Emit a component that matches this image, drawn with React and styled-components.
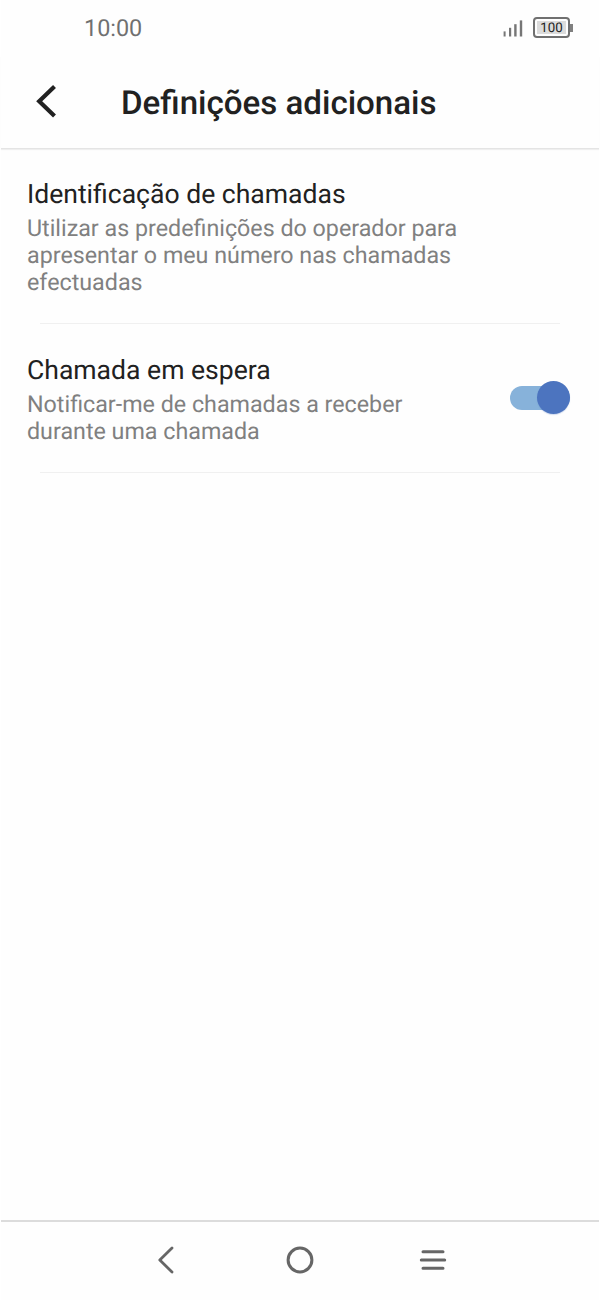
import React, { useState } from 'react';

import styled, { createGlobalStyle } from 'styled-components';


function App() {

    const [chamadaEmEspera, setChamadaEmEspera] = useState(true);

    return (
        <>
            <EstiloGlobal />

            <Ecra>

                <BarraEstado>
                    <Hora>10:00</Hora>

                    <IconesEstado>
                        <svg width="20" height="18" viewBox="0 0 20 18" fill="#767676">
                            <rect x="0.6" y="12.4" width="2" height="5.1" />
                            <rect x="6" y="8.8" width="2.2" height="8.7" />
                            <rect x="11.2" y="5.2" width="2.4" height="12.3" />
                            <rect x="16.8" y="1.4" width="2.4" height="16.1" />
                        </svg>

                        <Bateria>
                            <BateriaCorpo>
                                <BateriaNivel>100</BateriaNivel>
                            </BateriaCorpo>
                            <BateriaPonta />
                        </Bateria>
                    </IconesEstado>
                </BarraEstado>


                <Cabecalho>
                    <BotaoVoltar aria-label="Voltar">
                        <svg width="22" height="34" viewBox="0 0 22 34" fill="none" stroke="#212121" strokeWidth="4.2">
                            <path d="M19.5 1.6 L4.2 16.3 L19.5 31" />
                        </svg>
                    </BotaoVoltar>
                    <Titulo>Definições adicionais</Titulo>
                </Cabecalho>


                <Lista>

                    <Opcao>
                        <OpcaoTexto>
                            <OpcaoTitulo>Identificação de chamadas</OpcaoTitulo>
                            <OpcaoDescricao>
                                Utilizar as predefinições do operador para<br />
                                apresentar o meu número nas chamadas<br />
                                efectuadas
                            </OpcaoDescricao>
                        </OpcaoTexto>
                    </Opcao>
                    <Divisor />

                    <Opcao $topo={30}>
                        <OpcaoTexto>
                            <OpcaoTitulo>Chamada em espera</OpcaoTitulo>
                            <OpcaoDescricao>
                                Notificar-me de chamadas a receber<br />
                                durante uma chamada
                            </OpcaoDescricao>
                        </OpcaoTexto>
                        <Interruptor
                            role="switch"
                            aria-label="Chamada em espera"
                            aria-checked={chamadaEmEspera}
                            $ativo={chamadaEmEspera}
                            onClick={() => setChamadaEmEspera(!chamadaEmEspera)}
                        >
                            <Calha $ativo={chamadaEmEspera} />
                            <Botao $ativo={chamadaEmEspera} />
                        </Interruptor>
                    </Opcao>
                    <Divisor />

                </Lista>


                <BarraNavegacao>
                    <svg width="30" height="30" viewBox="0 0 30 30" fill="none" stroke="#666" strokeWidth="2.8" strokeLinecap="round" strokeLinejoin="round">
                        <path d="M20 3 L7.8 15 L20 27" />
                    </svg>
                    <svg width="30" height="30" viewBox="0 0 30 30" fill="none" stroke="#666" strokeWidth="3">
                        <circle cx="15" cy="15" r="11.9" />
                    </svg>
                    <svg width="30" height="30" viewBox="0 0 30 30" stroke="#666" strokeWidth="3" strokeLinecap="round">
                        <path d="M5 6.7 H25 M3.3 15 H26.7 M5 23.3 H25" />
                    </svg>
                </BarraNavegacao>

            </Ecra>
        </>
    )
}


const EstiloGlobal = createGlobalStyle`
  body {
    margin: 0;
    background: #fff;
    font-family: Roboto, "Liberation Sans", sans-serif;
    text-rendering: geometricPrecision;
  }
`;


const Ecra = styled.div`
  box-sizing: border-box;
  width: 600px;
  height: 1300px;
  padding: 0 1px;
  display: flex;
  flex-direction: column;
  background: linear-gradient(#fefefe, #fefefe) content-box, #fff;
  overflow: hidden;
`;


const BarraEstado = styled.div`
  height: 56px;
  padding: 0 26px 0 83px;
  display: flex;
  align-items: center;
  justify-content: space-between;
`;

const Hora = styled.span`
  font-size: 23.4px;
  line-height: 28px;
  color: #707070;
`;

const IconesEstado = styled.div`
  display: flex;
  align-items: center;
  gap: 10px;
`;

const Bateria = styled.div`
  padding-bottom: 1px;
  display: flex;
  align-items: center;
`;

const BateriaCorpo = styled.div`
  box-sizing: border-box;
  width: 37px;
  height: 21px;
  padding: 2px;
  border: 2px solid #707070;
  border-radius: 4px;
`;

const BateriaNivel = styled.div`
  height: 13px;
  background: #dcdcdc;
  color: #222;
  font-size: 13.3px;
  line-height: 15px;
  text-align: center;
`;

const BateriaPonta = styled.div`
  width: 3px;
  height: 8px;
  background: #808080;
`;


const Cabecalho = styled.header`
  box-sizing: border-box;
  height: 93px;
  margin-bottom: 1px;
  padding-left: 34px;
  display: flex;
  align-items: center;
  gap: 64px;
  border-bottom: 1px solid #e4e4e4;
  box-shadow: 0 1px 1px rgba(0, 0, 0, 0.06);
`;

const BotaoVoltar = styled.button`
  display: flex;
  padding: 0;
  border: 0;
  background: none;
`;

const Titulo = styled.h1`
  margin: 0;
  padding-top: 4px;
  font-size: 33.1px;
  font-weight: 500;
  line-height: 40px;
  color: #212121;
  white-space: nowrap;
`;


const Lista = styled.main`
  flex: 1;
`;

const Opcao = styled.div`
  padding: ${({ $topo = 28 }) => $topo}px 29px 27px 26px;
  display: flex;
  align-items: center;
  justify-content: space-between;
`;

const OpcaoTexto = styled.div`
  white-space: nowrap;
`;

const OpcaoTitulo = styled.h2`
  margin: 0 0 3px;
  font-size: 26.55px;
  font-weight: 400;
  line-height: 34px;
  color: #212121;
`;

const OpcaoDescricao = styled.p`
  margin: 0;
  font-size: 23.28px;
  line-height: 27px;
  color: #808080;
`;

const Divisor = styled.div`
  height: 1px;
  margin: 0 39px;
  background: #f0f0f0;
`;


const Interruptor = styled.button`
  width: 60px;
  height: 34px;
  margin-bottom: 3px;
  padding: 0;
  border: 0;
  display: grid;
  align-items: center;
  justify-items: ${({ $ativo }) => ($ativo ? 'end' : 'start')};
  background: none;
`;

const Calha = styled.span`
  grid-area: 1 / 1;
  justify-self: stretch;
  height: 24px;
  border-radius: 12px;
  background: ${({ $ativo }) => ($ativo ? '#87b2da' : '#cfcfcf')};
`;

const Botao = styled.span`
  grid-area: 1 / 1;
  align-self: start;
  width: 33px;
  height: 33px;
  border-radius: 50%;
  background: ${({ $ativo }) => ($ativo ? '#4c74bf' : '#f4f4f4')};
  box-shadow: 0 1px 1px rgba(76, 116, 191, 0.25);
`;


const BarraNavegacao = styled.nav`
  box-sizing: border-box;
  height: 80px;
  padding-bottom: 2px;
  border-top: 2px solid #dcdcdc;
  display: flex;
  align-items: center;
  justify-content: center;
  gap: 103px;
`;

export default App
